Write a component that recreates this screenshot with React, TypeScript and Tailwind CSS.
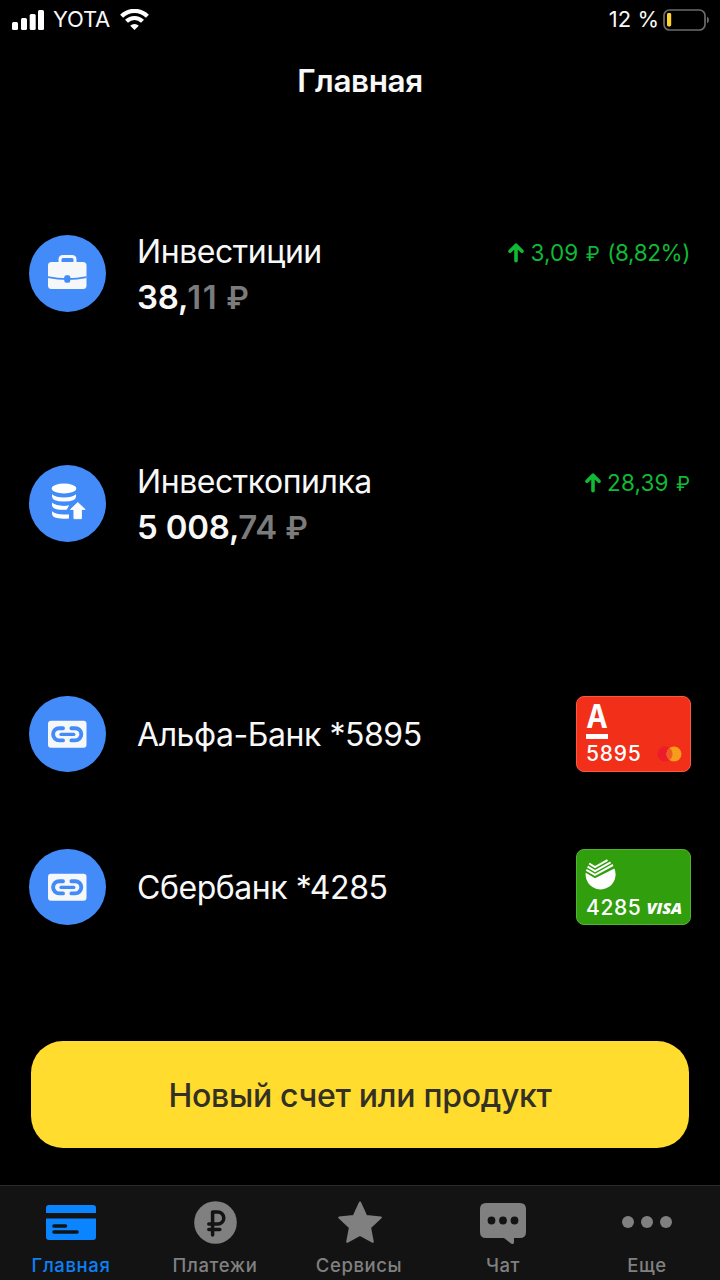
import type { ReactNode } from 'react'

function SignalIcon() {
	return (
		<svg className="w-8 h-5" viewBox="0 0 32 20" fill="#fff">
			<rect x="0" y="12" width="6" height="8" rx="1.5" />
			<rect x="9" y="8" width="6" height="12" rx="1.5" />
			<rect x="17.7" y="4" width="6" height="16" rx="1.5" />
			<rect x="26" y="0" width="6" height="20" rx="1.5" />
		</svg>
	)
}

function WifiIcon() {
	return (
		<svg className="w-[29px] h-[21px]" viewBox="0 0 29 21" fill="none" stroke="#fff" strokeWidth="4.2">
			<path d="M1.6 7.2a18.3 18.3 0 0 1 25.8 0" />
			<path d="M6.5 12.3a11.4 11.4 0 0 1 16 0" />
			<path d="M14.5 21l-4.3-4.3a6 6 0 0 1 8.6 0z" fill="#fff" stroke="none" />
		</svg>
	)
}

function BatteryIcon() {
	return (
		<svg className="w-[46px] h-[22px]" viewBox="0 0 46 22">
			<rect x="1" y="1" width="41" height="20" rx="5.5" fill="none" stroke="#6b6b6b" strokeWidth="1.7" />
			<path d="M44 7.5q2 1.2 2 3.5t-2 3.5z" fill="#6b6b6b" />
			<rect x="4" y="4" width="4.2" height="13.5" rx="1.4" fill="#fdd32f" />
		</svg>
	)
}

function BriefcaseIcon() {
	return (
		<svg className="size-[77px]" viewBox="0 0 77 77">
			<path d="M31 28v-3.500q0-3 3-3h9q3 0 3 3v3.500" fill="none" stroke="#f6f7f9" strokeWidth="3" />
			<rect x="19" y="27" width="38.5" height="27" rx="3.5" fill="#f6f7f9" />
			<path d="M19 42.2q19.5 4 38.5 0" fill="none" stroke="#428bf9" strokeWidth="1.7" />
			<rect x="35.3" y="40.2" width="6" height="7.6" rx="2" fill="#428bf9" />
		</svg>
	)
}

function CoinsIcon() {
	return (
		<svg className="size-[77px]" viewBox="0 0 77 77">
			<g fill="#fff">
				<ellipse cx="35" cy="23.5" rx="12.3" ry="5" />
				<path d="M23 29.2q4 3.2 12 3.2t12-3.2v2.3q0 5-12 5t-12-5z" />
				<path d="M23 37.6q4 3.3 12 3.3 2.4 0 5.2-.6l-2.5 4.5q-14.7.6-14.7-4.5z" />
				<path d="M23 46.2q4 3.2 12 3.2h5v4q-17 1.3-17-4.6z" />
				<path d="M48.8 37.5l-7.4 7h3.5v9.2h7.6v-9.2h3.7z" stroke="#fff" strokeWidth=".8" strokeLinejoin="round" />
			</g>
		</svg>
	)
}

function LinkIcon() {
	return (
		<svg className="size-[77px]" viewBox="0 0 77 77">
			<rect x="19" y="24.7" width="38.5" height="27" rx="3" fill="#f6f7f9" />
			<g fill="none" stroke="#428bf9" strokeWidth="3.9" strokeLinecap="round">
				<path d="M34 32.200h-3.800a6.100 6.100 0 0 0 0 12.200h3.800M42.400 32.200h3.800a6.100 6.100 0 0 1 0 12.200h-3.800" />
				<path d="M32 38.4h12.8" strokeWidth="3.2" />
			</g>
		</svg>
	)
}

function MastercardLogo() {
	return (
		<svg className="w-[25px] h-4" viewBox="0 0 25 16">
			<circle cx="8" cy="8" r="7.5" fill="#ec1c2b" />
			<circle cx="17" cy="8" r="7.5" fill="#f79c1d" />
			<path d="M12.5 2a7.5 7.5 0 0 1 0 12 7.5 7.5 0 0 1 0-12z" fill="#ef5a20" />
		</svg>
	)
}

function SberLogo() {
	return (
		<svg className="-ml-px size-[31px]" viewBox="0 0 31 31">
			<path d="M.7 13.7L10 19.200 29.400 9.500A15 15 0 1 1 .7 13.7z" fill="#fff" />
			<g fill="none" stroke="#fff" strokeWidth="2">
				<path d="M4.2 4.5l5.8 3.700L22.500 1.200" />
				<path d="M2.6 7.600l7.400 4.400L25.600 3.300" />
				<path d="M1.3 10.800l8.700 5L28 6" />
			</g>
		</svg>
	)
}

function ArrowUp() {
	return (
		<svg className="w-4 h-5" viewBox="0 0 16 20" fill="none" stroke="#0fba35" strokeWidth="3.6" strokeLinecap="round" strokeLinejoin="round">
			<path d="M8 17.8V2.8M2 8.2l6-6 6 6" />
		</svg>
	)
}

function RoundIcon({ children }: { children: ReactNode }) {
	return <div className="size-[76.5px] shrink-0 rounded-full bg-[#428bf9]">{children}</div>
}

type AccountProps = { icon: ReactNode; name: string; whole: string; cents: ReactNode; profit: ReactNode }

function Account({ icon, name, whole, cents, profit }: AccountProps) {
	return (
		<section className="flex items-center h-[77px] pl-[29px] pr-[30px]">
			<RoundIcon>{icon}</RoundIcon>
			<div className="flex flex-col ml-[31.5px] whitespace-nowrap">
				<h2 className="h-[46px] leading-[34px] tracking-[-0.45px]">{name}</h2>
				<p className="h-[32px] leading-[32px] text-[33px] font-semibold tracking-[-0.2px]">
					{whole}
					<span className="-ml-px text-[#7b7b7b]">
						{cents} <span className="text-[31px]">₽</span>
					</span>
				</p>
			</div>
			<div className="flex items-center self-start gap-[6px] ml-auto mt-2 h-5 text-[22.5px] tracking-[0.1px] text-[#0fba35] whitespace-nowrap">
				<ArrowUp />
				<span className="leading-5">{profit}</span>
			</div>
		</section>
	)
}

function LinkedCard({ name, children }: { name: string; children: ReactNode }) {
	return (
		<section className="flex items-center h-[76px] pl-[29px] pr-[29px]">
			<RoundIcon>
				<LinkIcon />
			</RoundIcon>
			<h2 className="ml-[31.5px] pt-[2px] whitespace-nowrap tracking-[-0.45px]">{name}</h2>
			{children}
		</section>
	)
}

function Tab({ label, active, children }: { label: string; active?: boolean; children: ReactNode }) {
	return (
		<a className={active ? 'flex flex-col items-center w-36 pr-[2px] text-[#0c80f5]' : 'flex flex-col items-center w-36 pr-[2px] text-[#808080]'}>
			<div className="flex items-center justify-center h-[72px]">{children}</div>
			<span className="-mt-[3px] h-5 leading-5 text-[18.5px] font-medium tracking-[0.6px] whitespace-nowrap">{label}</span>
		</a>
	)
}

export default function App() {
	return (
		<div className="flex flex-col w-[720px] h-[1280px] overflow-hidden bg-black text-[#f8f8f8] font-[Inter,'Liberation_Sans',sans-serif]">
			{/* STATUS BAR */}
			<header className="flex items-center h-[39px] pl-[12px] pr-[11px] text-[22px]">
				<SignalIcon />
				<span className="ml-[9px] mr-[10px] tracking-[-0.2px]">YOTA</span>
				<WifiIcon />
				<span className="ml-auto mr-[4px]">12 %</span>
				<BatteryIcon />
			</header>

			<h1 className="h-[84px] leading-[84px] text-center text-[31.5px] font-semibold tracking-[-0.4px]">Главная</h1>

			{/* ACCOUNTS */}
			<main className="flex flex-col mt-[112px] text-[32px]">
				<Account
					icon={<BriefcaseIcon />}
					name="Инвестиции"
					whole="38,"
					cents={<span className="tracking-[1.4px]">11</span>}
					profit={
						<>
							3,09 <span className="mx-px text-[20px]">₽</span> <span className="tracking-[-0.4px]">(8,82%)</span>
						</>
					}
				/>
				<div className="h-[153px]" />
				<Account
					icon={<CoinsIcon />}
					name="Инвесткопилка"
					whole="5 008,"
					cents="74"
					profit={
						<>
							28,39 <span className="ml-px text-[20px]">₽</span>
						</>
					}
				/>
				<div className="h-[154px]" />
				<LinkedCard name="Альфа-Банк *5895">
					<div className="flex flex-col w-[115px] h-[76px] ml-auto pl-[9px] pr-[8px] rounded-[8px] border border-[#f95a43] bg-[#f22f18]">
						<div className="flex justify-center w-[22px] h-[37px] mt-[5px] border-b-[5px] border-white">
							<span className="scale-x-90 text-[32px] leading-[30px] font-bold text-white">А</span>
						</div>
						<div className="flex items-center justify-between h-[30px]">
							<span className="text-[21px] font-medium tracking-[0.8px] text-white">5895</span>
							<MastercardLogo />
						</div>
					</div>
				</LinkedCard>
				<div className="h-[77px]" />
				<LinkedCard name="Сбербанк *4285">
					<div className="flex flex-col w-[115px] h-[76px] ml-auto pl-[9px] pr-[8px] pt-[9px] rounded-[8px] border border-[#52b232] bg-[#309e0d]">
						<SberLogo />
						<div className="flex items-center justify-between h-[34px] pt-px text-white">
							<span className="text-[21px] font-medium tracking-[0.6px]">4285</span>
							<span className="pt-[2px] font-['Open_Sans'] text-[16.5px] italic font-extrabold tracking-[-0.2px]">VISA</span>
						</div>
					</div>
				</LinkedCard>
			</main>

			<button className="w-[658px] h-[107px] shrink-0 mx-auto mt-[116px] pt-[2px] rounded-[32px] bg-[#ffdc2d] text-[#333026] text-[32px] font-medium tracking-[-0.3px]">
				Новый счет или продукт
			</button>

			{/* TAB BAR */}
			<nav className="flex w-full h-[95px] shrink-0 mt-auto border-t border-[#2b2b2b] bg-[#131313]">
				<Tab label="Главная" active>
					<svg className="w-[50px] h-[35px]" viewBox="0 0 50 35">
						<path d="M3 0h44q3 0 3 3v5H0V3q0-3 3-3zM0 13.5h50V32q0 3-3 3H3q-3 0-3-3z" fill="#0a84ff" />
						<path d="M8 21h11.5M8 27h23" stroke="#131313" strokeWidth="3.6" strokeLinecap="round" />
					</svg>
				</Tab>
				<Tab label="Платежи">
					<svg className="size-[43px]" viewBox="0 0 43 43">
						<circle cx="21.5" cy="21.5" r="21.3" fill="#808080" />
						<path
							d="M18.6 34V11h5.2a6 6 0 0 1 0 12h-9M14.8 28.500h11"
							fill="none"
							stroke="#131313"
							strokeWidth="3.5"
							strokeLinecap="round"
							strokeLinejoin="round"
						/>
					</svg>
				</Tab>
				<Tab label="Сервисы">
					<svg className="w-[44px] h-[42px] ml-[2px]" viewBox="0 0 44 42">
						<path
							d="M22 1.5l6.2 13.4 14.6 1.7-10.7 10 2.7 14.2L22 33.8 9.2 40.8l2.7-14.2-10.7-10 14.6-1.7z"
							fill="#808080"
							stroke="#808080"
							strokeWidth="2"
							strokeLinejoin="round"
						/>
					</svg>
				</Tab>
				<Tab label="Чат">
					<svg className="w-[46px] h-[41px] mt-[2px]" viewBox="0 0 46 41">
						<path d="M6 0h34q6 0 6 6v23q0 6-6 6h-6v4q0 3-3 1.5L24 35H6q-6 0-6-6V6q0-6 6-6z" fill="#808080" />
						<circle cx="11.5" cy="17.5" r="3.9" fill="#131313" />
						<circle cx="23" cy="17.5" r="3.9" fill="#131313" />
						<circle cx="34.5" cy="17.5" r="3.9" fill="#131313" />
					</svg>
				</Tab>
				<Tab label="Еще">
					<svg className="w-[50px] h-3" viewBox="0 0 50 12" fill="#808080">
						<circle cx="6" cy="6" r="6" />
						<circle cx="25" cy="6" r="6" />
						<circle cx="44" cy="6" r="6" />
					</svg>
				</Tab>
			</nav>
		</div>
	)
}
